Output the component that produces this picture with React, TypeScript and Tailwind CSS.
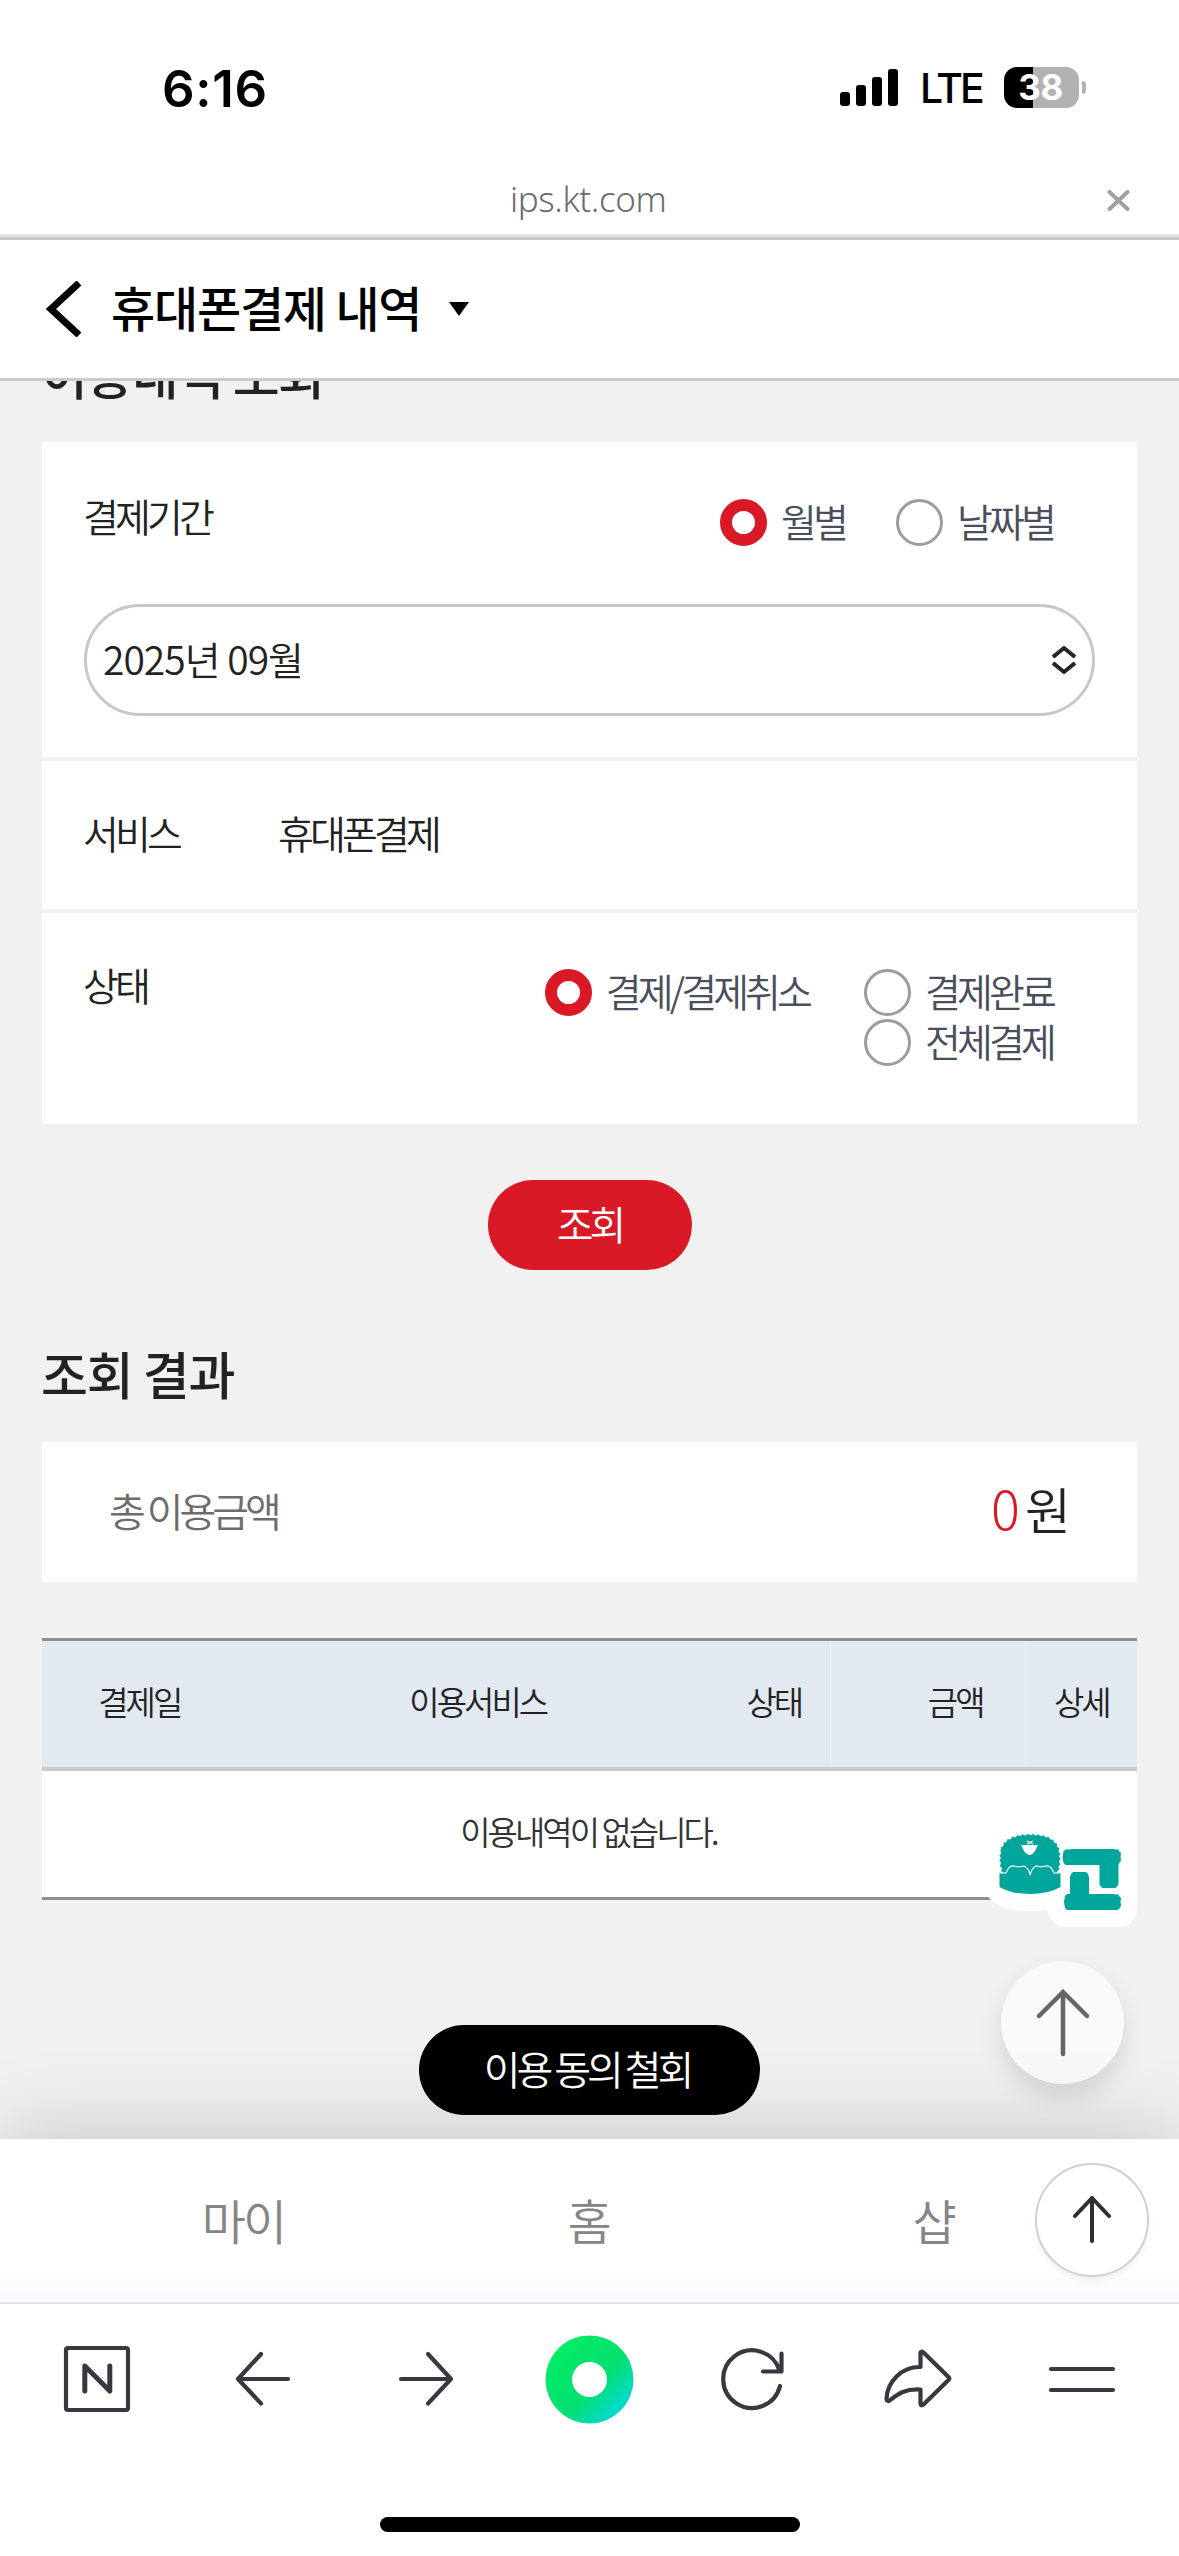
import { ReactNode } from 'react'
import clsx from 'clsx'

function StatusBar() {
  return (
    <div className="flex h-[176px] items-start justify-between pl-[162px] pr-[93px] font-['Inter',sans-serif] text-black">
      <span className="mt-[58px] text-[51px] font-semibold leading-[62px] tracking-[0.7px]">6:16</span>
      <div className="mt-[67px] flex h-[41px] items-center">
        <svg width="58" height="38" viewBox="0 0 58 38">
          <rect x="0" y="23" width="10" height="14" rx="3" />
          <rect x="16" y="16" width="10" height="21" rx="3" />
          <rect x="32" y="8" width="10" height="29" rx="3" />
          <rect x="48" y="0" width="10" height="37" rx="3" />
        </svg>
        <span className="ml-[22px] w-[62px] pt-[2px] text-[41px] font-medium leading-[41px] tracking-[-3px]">LTE</span>
        <div className="ml-[22px] flex h-[41px] w-[75px] items-center justify-center rounded-[13px] bg-[linear-gradient(to_right,#000_39%,#b2b2b2_39%)] pr-[2px] text-[35px] font-bold leading-[41px] tracking-[-0.5px] text-white">
          38
        </div>
        <div className="ml-[3px] h-[13px] w-[4px] rounded-r-full bg-[#b2b2b2]" />
      </div>
    </div>
  )
}

function AddressBar() {
  return (
    <div className="flex h-[58px] items-start justify-end pr-[49px]">
      <span className="w-[597px] font-['Noto_Sans',sans-serif] text-[35px] font-light leading-[46px] tracking-[-0.4px] text-[#6c6c6c]">
        ips.kt.com
      </span>
      <svg className="mt-[14px]" width="23" height="21" viewBox="0 0 23 21" fill="none" stroke="#a0a0a0" strokeWidth="4" strokeLinecap="round">
        <path d="M2.5 2l18 17M20.5 2l-18 17" />
      </svg>
    </div>
  )
}

function PageHeader() {
  return (
    <div className="flex h-[141px] items-center border-b-3 border-[#cbcbcb] bg-white pl-[46px]">
      <svg width="36" height="56" viewBox="0 0 36 56" fill="none" stroke="#000" strokeWidth="7">
        <path d="M33 2L5 28l28 26" />
      </svg>
      <h1 className="-mt-[7px] ml-[29px] text-[48px] font-medium leading-[60px] tracking-[-1.2px] text-black">휴대폰결제 내역</h1>
      <svg className="ml-[28px]" width="20" height="14" viewBox="0 0 20 14">
        <path d="M0 0h20L10 14z" />
      </svg>
    </div>
  )
}

function Radio({ checked, children }: { checked?: boolean; children: ReactNode }) {
  return (
    <label className="flex h-[50px] items-center">
      <span
        className={clsx(
          'size-[47px] shrink-0 rounded-full bg-white',
          checked ? 'border-12 border-[#d91926]' : 'border-3 border-[#9c9c9c]'
        )}
      />
      <span className="-mt-[4px] ml-[14px] text-[39px] font-[350] leading-[50px] tracking-[-3.9px] text-[#4a4e5c]">{children}</span>
    </label>
  )
}

function SearchForm() {
  return (
    <div className="flex flex-col gap-[4px] text-[39px] font-[350] leading-[50px] tracking-[-3.9px] text-[#222]">
      <div className="h-[315px] bg-white pl-[41px] pr-[42px] pt-[48px]">
        <div className="flex justify-between pr-[42px]">
          <span>결제기간</span>
          <div className="mt-[7px] flex gap-[51px]">
            <Radio checked>월별</Radio>
            <Radio>날짜별</Radio>
          </div>
        </div>
        <div className="ml-px mt-[57px] flex h-[112px] items-center justify-between rounded-full border-3 border-[#c8c8c8] pl-[16px] pr-[15px]">
          <span className="-mt-[5px] tracking-[-1px]">2025년 09월</span>
          <svg width="26" height="28" viewBox="0 0 26 28" fill="none" stroke="#222" strokeWidth="4" strokeLinejoin="round">
            <path d="M2 11l11-9 11 9M2 17l11 9 11-9" />
          </svg>
        </div>
      </div>
      <div className="flex h-[148px] bg-white px-[41px] pt-[46px]">
        <span className="w-[195px]">서비스</span>
        <span>휴대폰결제</span>
      </div>
      <div className="flex h-[211px] justify-between bg-white pl-[41px] pr-[84px] pt-[46px]">
        <span>상태</span>
        <div className="mt-[8px] flex gap-[55px]">
          <Radio checked>결제/결제취소</Radio>
          <div>
            <Radio>결제완료</Radio>
            <Radio>전체결제</Radio>
          </div>
        </div>
      </div>
    </div>
  )
}

function ResultTable() {
  return (
    <table className="mt-[56px] w-full table-fixed border-y-3 border-[#8e8e8e] text-[33px] leading-[42px] tracking-[-3px] text-[#222]">
      <colgroup>
        <col className="w-[195px]" />
        <col className="w-[481px]" />
        <col className="w-[112px]" />
        <col className="w-[195px]" />
        <col className="w-[112px]" />
      </colgroup>
      <thead>
        <tr className="h-[129px] border-b-4 border-[#cacaca] bg-[#e2e9f1]">
          <th className="border-r border-[#e5eaf2] pb-[6px] font-[350]">결제일</th>
          <th className="pb-[6px] font-[350]">이용서비스</th>
          <th className="border-r border-[#edf1f6] pb-[6px] font-[350]">상태</th>
          <th className="border-r border-[#e6ebf3] pb-[6px] pr-[42px] text-right font-[350]">금액</th>
          <th className="pb-[6px] font-[350]">상세</th>
        </tr>
      </thead>
      <tbody>
        <tr className="h-[130px] bg-white">
          <td colSpan={5} className="pb-[5px] pr-[2px] text-center font-[350] text-[#333]">이용내역이 없습니다.</td>
        </tr>
      </tbody>
    </table>
  )
}

function ShopBadge() {
  return (
    <svg className="absolute left-[984px] top-[1448px]" width="154" height="98" viewBox="984 1829 154 98">
      <path d="M985 1829h152v78q0 20-20 20h-50q-15 0-20-17c-26 4-60-1-62-22z" fill="#fff" />
      <g fill="#00a59c">
        <path d="M1002 1848q5-13 28-13t28 13q3 11 0 22l-2 4h-52l-2-4q-3-11 0-22z" stroke="#00a59c" strokeWidth="2.2" strokeDasharray="0.1 5" strokeLinecap="round" />
        <path d="M999.500 1873h61v14q-12 7-30.500 7t-30.500-7z" />
        <path d="M1067 1849q2 1 4 0h43q2 1 4 0l1 2 2 2-.5 4 .5 4-2 2-.5 2v18l-1 3-2 2h-13l-3-3v-20h-34l-2-2-1-6 1-6z" />
        <path d="M1073 1872h13l2 2 1 3v17h25q2 1 4 0l1 2 2 2-.5 4 .5 4-2 3-2 1h-50l-2-2-1-6 1-6 2-2h3v-17l1-3z" />
      </g>
      <path d="M1021 1845h17l-3 6q-3 4-5 4-3 0-6-4z" fill="#fff" />
      <path
        d="M1000 1873l6 0q3-8 8-7l5 1 5-1q5 2 6 9 2-7 6-9l5 1 5-1q5-1 8 7l6 0M1027 1841l3 1.500-3 1.500M1033 1841l-3 1.500 3 1.500"
        fill="none"
        stroke="#fff"
        strokeWidth="1.2"
      />
    </svg>
  )
}

function BottomNav() {
  return (
    <nav className="relative flex h-[163px] bg-linear-to-b from-white from-80% to-[#f7f8fb] px-[72px] shadow-[0_0_90px_rgba(0,0,0,0.2)]">
      {['마이', '홈', '샵'].map(label => (
        <span key={label} className="flex-1 pt-[48px] text-center text-[48px] font-[350] leading-[64px] tracking-[-3px] text-[#858585]">
          <span className="-ml-[3px]">{label}</span>
        </span>
      ))}
      <button className="absolute right-[30px] top-[24px] flex size-[114px] items-center justify-center rounded-full border-2 border-[#d0d0d0] bg-white shadow-[0_4px_6px_rgba(0,0,0,0.06)]">
        <svg width="38" height="48" viewBox="0 0 38 48" fill="none" stroke="#2d2d35" strokeWidth="4" strokeLinecap="round" strokeLinejoin="round">
          <path d="M19 45V2M2 20L19 2l17 18" />
        </svg>
      </button>
    </nav>
  )
}

function BrowserToolbar() {
  return (
    <div className="relative flex h-[254px] flex-col items-center justify-between border-t-2 border-[#e2e3e5] bg-white pb-[24px]">
      <svg width="1179" height="150" viewBox="0 2304 1179 150" fill="none" stroke="#363a40" strokeWidth="4.2" strokeLinecap="round" strokeLinejoin="round">
        <defs>
          <linearGradient id="dot" x1="0.1" y1="0.1" x2="0.88" y2="0.88">
            <stop offset="0" stopColor="#05ee64" />
            <stop offset="0.6" stopColor="#03df70" />
            <stop offset="1" stopColor="#03d9dd" />
          </linearGradient>
        </defs>
        <rect x="66" y="2348" width="62" height="62" rx="2" />
        <path d="M84.800 2391v-25l25 25v-25" strokeWidth="5" />
        <path d="M288 2379h-49M261 2354l-23 25 23 24.500" />
        <path d="M401 2379h49M428 2354l23 25-23 24.500" />
        <circle cx="589.500" cy="2379.500" r="44" fill="url(#dot)" stroke="none" />
        <circle cx="589.500" cy="2379.500" r="17.500" fill="#fff" stroke="none" />
        <path d="M780 2386a28.800 28.800 0 1 1-.5-15.500M781.500 2353.500v18h-18.500" />
        <path d="M920.500 2352.500q1-2 3 0l25 24.500q1.500 1.500 0 3l-25 24.500q-3 2-3-1v-14c-16-1-23 5-31 11-2 1-3 0-3-2 1-17 15-32 34-31.500z" />
        <path d="M1051 2369h62M1051 2390h62" />
      </svg>
      <div className="h-[15px] w-[420px] rounded-full bg-black" />
    </div>
  )
}

export default function App() {
  return (
    <div className="flex h-[2556px] w-[1179px] flex-col overflow-hidden bg-white font-['Noto_Sans_CJK_KR',sans-serif]">
      <StatusBar />
      <AddressBar />
      <div className="h-[6px] border-b-3 border-[#c9c9c9] bg-[#e3e3e3]" />
      <PageHeader />

      <main className="relative h-[1758px] overflow-hidden bg-[#f1f1f1] px-[42px]">
        <h2 className="-ml-px -mt-[40px] h-[101px] text-[51px] font-medium leading-[64px] tracking-[-1.5px] text-[#222]">이용내역 조회</h2>
        <SearchForm />
        <button className="mx-auto mt-[56px] block h-[90px] w-[204px] rounded-full bg-[#d91926] pb-[5px] pr-0 text-[40px] font-[350] tracking-[-4px] text-white">
          조회
        </button>

        <h2 className="-ml-px mt-[71px] h-[101px] text-[51px] font-medium leading-[64px] tracking-[-1.2px] text-[#222]">조회 결과</h2>
        <div className="flex h-[140px] items-center justify-between bg-white pl-[67px] pr-[66px] font-[350]">
          <span className="-mt-[5px] text-[40px] tracking-[-4px] text-[#6c6c6c]">총 이용금액</span>
          <span className="-mt-[12px] text-[50px] text-[#222]">
            <span className="mr-[5px] text-[54px] font-light text-[#d91926]">0</span>원
          </span>
        </div>
        <ResultTable />
        <button className="mx-auto mt-[125px] block h-[90px] w-[341px] rounded-full bg-black pb-[5px] pr-[5px] text-[40px] font-[350] tracking-[-4px] text-white">
          이용 동의 철회
        </button>

        <ShopBadge />
        <button className="absolute right-[55px] top-[1580px] flex size-[123px] items-center justify-center rounded-full bg-[#f9f9f9] shadow-[0_12px_24px_rgba(0,0,0,0.12)]">
          <svg width="54" height="68" viewBox="0 0 54 68" fill="none" stroke="#666" strokeWidth="4.500" strokeLinecap="round">
            <path d="M27 65V4M3 27L27 3l24 24" />
          </svg>
        </button>
      </main>

      <BottomNav />
      <BrowserToolbar />
    </div>
  )
}
